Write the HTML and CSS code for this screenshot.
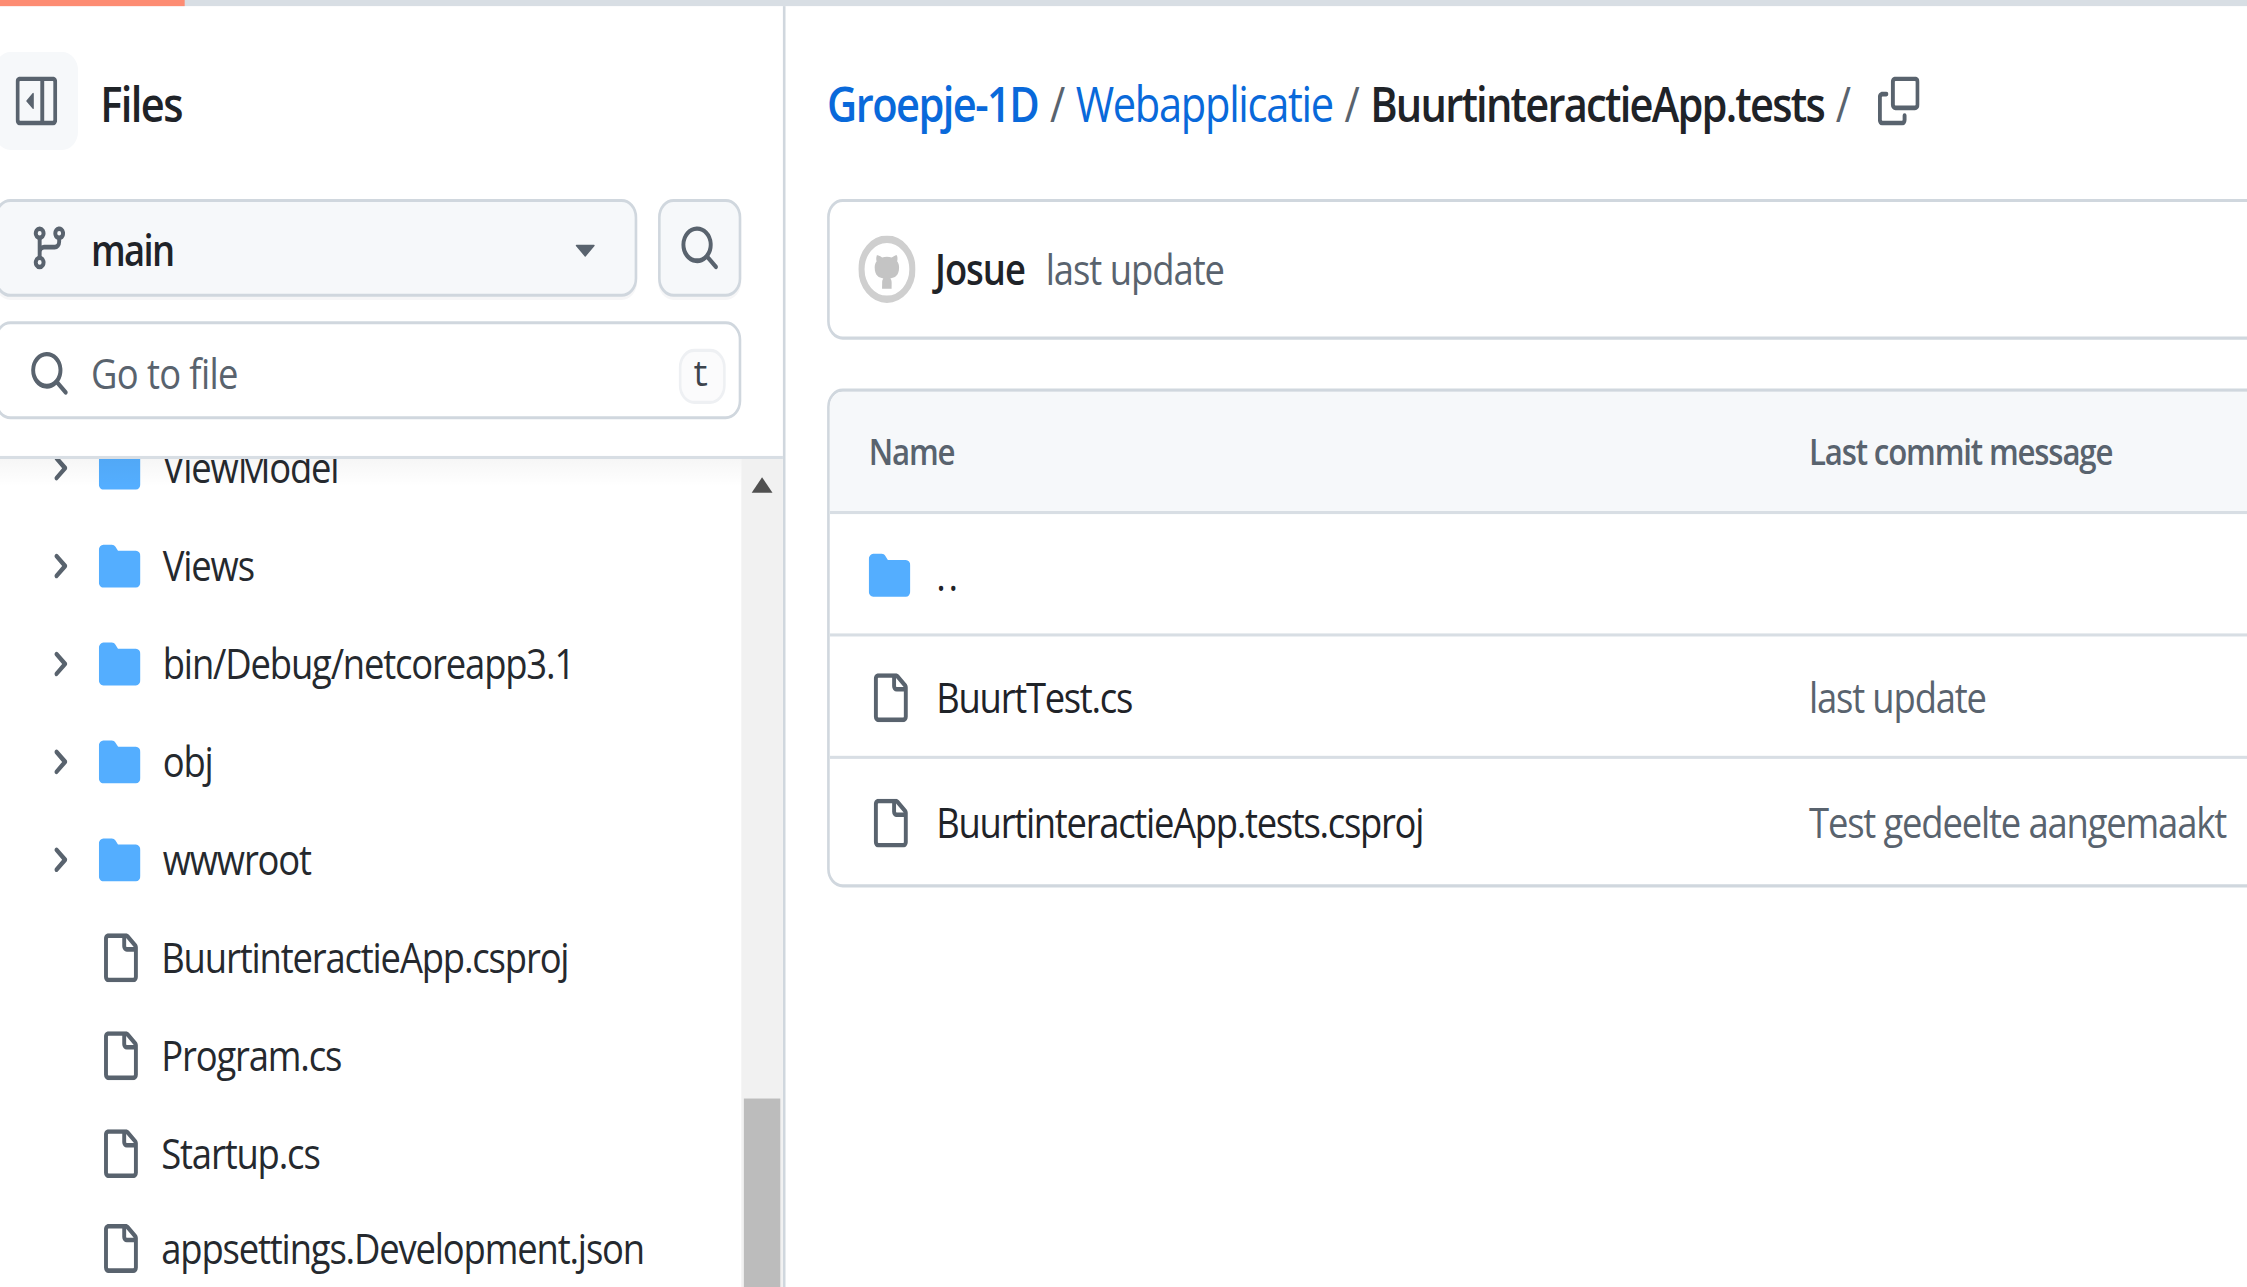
FILE: index.html
```html
<!DOCTYPE html>
<html lang="nl">
<head>
    <meta charset="UTF-8">
    <title>BuurtinteractieApp.tests</title>
    <link rel="stylesheet" href="styles.css">
</head>
<body>
    <svg class="icon-defs" aria-hidden="true">
        <symbol id="i-collapse" viewBox="0 0 16 16"><path d="m4.177 7.823 2.396-2.396A.25.25 0 0 1 7 5.604v4.792a.25.25 0 0 1-.427.177L4.177 8.177a.25.25 0 0 1 0-.354Z"/><path d="M0 1.75C0 .784.784 0 1.75 0h12.5C15.216 0 16 .784 16 1.75v12.5A1.75 1.75 0 0 1 14.25 16H1.75A1.75 1.75 0 0 1 0 14.25Zm1.75-.25a.25.25 0 0 0-.25.25v12.5c0 .138.112.25.25.25H9.5v-13Zm12.5 13a.25.25 0 0 0 .25-.25V1.75a.25.25 0 0 0-.25-.25H11v13Z"/></symbol>
        <symbol id="i-branch" viewBox="0 0 16 16"><path d="M9.5 3.25a2.25 2.25 0 1 1 3 2.122V6A2.5 2.5 0 0 1 10 8.5H6a1 1 0 0 0-1 1v1.128a2.251 2.251 0 1 1-1.5 0V5.372a2.25 2.25 0 1 1 1.5 0v1.836A2.493 2.493 0 0 1 6 7h4a1 1 0 0 0 1-1v-.628A2.25 2.25 0 0 1 9.5 3.25Zm-6 0a.75.75 0 1 0 1.5 0 .75.75 0 0 0-1.5 0Zm8.25-.75a.75.75 0 1 0 0 1.5.75.75 0 0 0 0-1.5ZM4.25 12a.75.75 0 1 0 0 1.5.75.75 0 0 0 0-1.5Z"/></symbol>
        <symbol id="i-caret" viewBox="0 0 16 16"><path d="m4.427 7.427 3.396 3.396a.25.25 0 0 0 .354 0l3.396-3.396A.25.25 0 0 0 11.396 7H4.604a.25.25 0 0 0-.177.427Z"/></symbol>
        <symbol id="i-search" viewBox="0 0 16 16"><path d="M10.68 11.74a6 6 0 0 1-7.922-8.982 6 6 0 0 1 8.982 7.922l3.04 3.04a.749.749 0 0 1-.326 1.275.749.749 0 0 1-.734-.215ZM11.5 7a4.499 4.499 0 1 0-8.997 0A4.499 4.499 0 0 0 11.5 7Z"/></symbol>
        <symbol id="i-chevron" viewBox="0 0 12 12"><path d="M4.7 10c-.2 0-.4-.1-.5-.2-.3-.3-.3-.8 0-1.1L6.9 6 4.2 3.3c-.3-.3-.3-.8 0-1.1.3-.3.8-.3 1.1 0l3.3 3.2c.3.3.3.8 0 1.1L5.3 9.7c-.2.2-.4.3-.6.3Z"/></symbol>
        <symbol id="i-folder" viewBox="0 0 16 16"><path d="M1.75 1A1.75 1.75 0 0 0 0 2.75v10.5C0 14.216.784 15 1.75 15h12.5A1.75 1.75 0 0 0 16 13.25v-8.5A1.75 1.75 0 0 0 14.25 3H7.5a.25.25 0 0 1-.2-.1l-.9-1.2C6.07 1.26 5.55 1 5 1H1.75Z"/></symbol>
        <symbol id="i-file" viewBox="0 0 16 16"><path d="M2 1.75C2 .784 2.784 0 3.75 0h6.586c.464 0 .909.184 1.237.513l2.914 2.914c.329.328.513.773.513 1.237v9.586A1.75 1.75 0 0 1 13.25 16h-9.5A1.75 1.75 0 0 1 2 14.25Zm1.75-.25a.25.25 0 0 0-.25.25v12.5c0 .138.112.25.25.25h9.5a.25.25 0 0 0 .25-.25V6h-2.75A1.75 1.75 0 0 1 9 4.25V1.5Zm6.75.062V4.25c0 .138.112.25.25.25h2.688l-.011-.013-2.914-2.914-.013-.011Z"/></symbol>
        <symbol id="i-copy" viewBox="0 0 16 16"><path d="M0 6.75C0 5.784.784 5 1.75 5h1.5a.75.75 0 0 1 0 1.5h-1.5a.25.25 0 0 0-.25.25v7.5c0 .138.112.25.25.25h7.5a.25.25 0 0 0 .25-.25v-1.5a.75.75 0 0 1 1.5 0v1.5A1.75 1.75 0 0 1 9.25 16h-7.5A1.75 1.75 0 0 1 0 14.25Z"/><path d="M5 1.75C5 .784 5.784 0 6.75 0h7.5C15.216 0 16 .784 16 1.75v7.5A1.75 1.75 0 0 1 14.25 11h-7.5A1.75 1.75 0 0 1 5 9.25Zm1.75-.25a.25.25 0 0 0-.25.25v7.5c0 .138.112.25.25.25h7.5a.25.25 0 0 0 .25-.25v-7.5a.25.25 0 0 0-.25-.25Z"/></symbol>
    </svg>

    <div class="page">
        <div class="progress"><div class="progress-fill"></div></div>
        <div class="layout">
            <aside class="sidebar">
                <div class="sidebar-head">
                    <div class="files-title">
                        <button class="toggle"><svg class="icon"><use href="#i-collapse"/></svg></button>
                        <h2>Files</h2>
                    </div>
                    <div class="branch-row">
                        <button class="branch-btn">
                            <svg class="icon"><use href="#i-branch"/></svg>
                            <span class="branch-name">main</span>
                            <svg class="icon caret"><use href="#i-caret"/></svg>
                        </button>
                        <button class="search-btn"><svg class="icon"><use href="#i-search"/></svg></button>
                    </div>
                    <div class="go-to-file">
                        <svg class="icon go-icon"><use href="#i-search"/></svg>
                        <span class="go-label">Go to file</span>
                        <kbd>t</kbd>
                    </div>
                </div>
                <div class="tree-wrap">
                    <div class="tree">
                        <ul class="tree-list">
                            <li class="tree-row"><svg class="chevron"><use href="#i-chevron"/></svg><svg class="icon folder"><use href="#i-folder"/></svg><span class="tree-label">ViewModel</span></li>
                            <li class="tree-row"><svg class="chevron"><use href="#i-chevron"/></svg><svg class="icon folder"><use href="#i-folder"/></svg><span class="tree-label">Views</span></li>
                            <li class="tree-row"><svg class="chevron"><use href="#i-chevron"/></svg><svg class="icon folder"><use href="#i-folder"/></svg><span class="tree-label">bin/Debug/netcoreapp3.1</span></li>
                            <li class="tree-row"><svg class="chevron"><use href="#i-chevron"/></svg><svg class="icon folder"><use href="#i-folder"/></svg><span class="tree-label">obj</span></li>
                            <li class="tree-row"><svg class="chevron"><use href="#i-chevron"/></svg><svg class="icon folder"><use href="#i-folder"/></svg><span class="tree-label">wwwroot</span></li>
                            <li class="tree-row file"><svg class="icon"><use href="#i-file"/></svg><span class="tree-label">BuurtinteractieApp.csproj</span></li>
                            <li class="tree-row file"><svg class="icon"><use href="#i-file"/></svg><span class="tree-label">Program.cs</span></li>
                            <li class="tree-row file"><svg class="icon"><use href="#i-file"/></svg><span class="tree-label">Startup.cs</span></li>
                            <li class="tree-row file"><svg class="icon"><use href="#i-file"/></svg><span class="tree-label">appsettings.Development.json</span></li>
                        </ul>
                    </div>
                    <div class="scrollbar">
                        <div class="scroll-up"></div>
                        <div class="scroll-thumb"></div>
                    </div>
                </div>
            </aside>

            <main class="content">
                <div class="breadcrumb">
                    <a class="crumb-owner">Groepje-1D</a>
                    <span class="sep">/</span>
                    <a class="crumb-repo">Webapplicatie</a>
                    <span class="sep">/</span>
                    <strong class="crumb-dir">BuurtinteractieApp.tests</strong>
                    <span class="sep">/</span>
                    <svg class="icon copy"><use href="#i-copy"/></svg>
                </div>

                <div class="commit-box">
                    <svg class="avatar" viewBox="0 0 22 22">
                        <circle cx="11" cy="11" r="9.8" fill="#fff" stroke="#cfcfcf" stroke-width="2.4"/>
                        <path fill="#c4c4c4" transform="translate(3.6 3.4) scale(.92)" d="M10 15.2c0-.27.01-1.13.01-2.2 0-.75-.25-1.23-.54-1.48 1.78-.2 3.65-.88 3.65-3.95 0-.88-.31-1.59-.82-2.15.08-.2.36-1.02-.08-2.12 0 0-.67-.22-2.2.82-.64-.18-1.32-.27-2-.27-.68 0-1.36.09-2 .27-1.53-1.03-2.2-.82-2.2-.82-.44 1.1-.16 1.92-.08 2.12-.51.56-.82 1.28-.82 2.15 0 3.06 1.86 3.75 3.64 3.95-.23.2-.44.55-.51 1.07L6 15.2Z"/>
                    </svg>
                    <span class="commit-author">Josue</span>
                    <span class="commit-msg">last update</span>
                </div>

                <div class="file-table">
                    <div class="table-row table-head">
                        <div class="col-name">Name</div>
                        <div class="col-msg">Last commit message</div>
                    </div>
                    <div class="table-row">
                        <div class="col-name"><svg class="icon folder"><use href="#i-folder"/></svg><span class="updir">..</span></div>
                        <div class="col-msg"></div>
                    </div>
                    <div class="table-row">
                        <div class="col-name"><svg class="icon"><use href="#i-file"/></svg>BuurtTest.cs</div>
                        <div class="col-msg">last update</div>
                    </div>
                    <div class="table-row">
                        <div class="col-name"><svg class="icon"><use href="#i-file"/></svg>BuurtinteractieApp.tests.csproj</div>
                        <div class="col-msg">Test gedeelte aangemaakt</div>
                    </div>
                </div>
            </main>
        </div>
    </div>
</body>
</html>
```

FILE: styles.css
```css
* {
    margin: 0;
    padding: 0;
    box-sizing: border-box;
}
html,
body {
    height: 100%;
    overflow: hidden;
    background: #fff;
}
/* the screenshot is a stretched capture, so the page is laid out at its
   original size and then scaled unevenly to fill the window */
.page {
    width: 864px;
    height: 421px;
    overflow: hidden;
    transform: scale(2.601, 3.06);
    transform-origin: 0 0;
    font-family: "Open Sans", "Noto Sans", sans-serif;
    font-size: 14px;
    color: #1f2328;
}
.icon-defs {
    display: none;
}
.icon {
    width: 16px;
    height: 16px;
    flex: none;
    fill: #59636e;
}
.progress {
    height: 1.5px;
    background: #d8dee4;
}
.progress-fill {
    width: 71px;
    height: 1.5px;
    background: #fd8c73;
}
.layout {
    display: flex;
    height: 419.5px;
}

/* sidebar */
.sidebar {
    width: 302px;
    flex: none;
    display: flex;
    flex-direction: column;
    border-right: 1px solid #d0d7de;
}
.sidebar-head {
    margin-left: -2px;
    padding: 15.8px 16px 11.7px 0;
    border-bottom: 1px solid #d8dee4;
}
.files-title {
    display: flex;
    align-items: center;
    gap: 8.5px;
}
.files-title h2 {
    margin-top: 2.4px;
    font-size: 16px;
    font-weight: 600;
    letter-spacing: -0.6px;
}
.toggle {
    width: 32px;
    height: 32px;
    display: flex;
    align-items: center;
    justify-content: center;
    border: none;
    border-radius: 6px;
    background: #f6f8fa;
}
.branch-row {
    display: flex;
    gap: 8px;
    margin-top: 16px;
}
.branch-btn,
.search-btn {
    height: 32px;
    display: flex;
    align-items: center;
    border: 1px solid #d0d7de;
    border-radius: 6px;
    background: #f6f8fa;
    box-shadow: 0 1px 0 rgba(31, 35, 40, 0.04);
    font-family: inherit;
    color: inherit;
}
.branch-btn {
    flex: 1;
    padding: 0 12px;
    gap: 8px;
}
.branch-name {
    flex: 1;
    margin-top: 1px;
    text-align: left;
    font-size: 14px;
    font-weight: 600;
    letter-spacing: -0.65px;
}
.caret {
    margin-right: -0.5px;
}
.search-btn {
    width: 32px;
    justify-content: center;
}
.go-to-file {
    height: 32px;
    margin-top: 8px;
    padding: 0 5.5px 0 12px;
    display: flex;
    align-items: center;
    gap: 8px;
    border: 1px solid #d0d7de;
    border-radius: 6px;
}
.go-icon {
    margin-top: 2px;
}
.go-label {
    flex: 1;
    color: #59636e;
    letter-spacing: -0.25px;
}
kbd {
    width: 18px;
    height: 18px;
    margin-top: 3px;
    display: flex;
    align-items: center;
    justify-content: center;
    border: 1px solid #eef0f3;
    border-radius: 6px;
    background: #fbfbfc;
    font-family: "Liberation Mono", monospace;
    font-size: 12px;
    color: #3d444d;
}
.tree-wrap {
    flex: 1;
    min-height: 0;
    display: flex;
}
.tree {
    flex: 1;
    overflow: hidden;
    position: relative;
}
.tree::before {
    content: "";
    position: absolute;
    top: 0;
    left: 0;
    right: 0;
    height: 9px;
    background: linear-gradient(rgba(0, 0, 0, 0.035), rgba(0, 0, 0, 0));
}
.tree-list {
    list-style: none;
    margin-top: -13px;
}
.tree-row {
    height: 31.95px;
    padding-left: 16.6px;
    display: flex;
    align-items: center;
    letter-spacing: -0.45px;
    color: #25292e;
}
.tree-row.file {
    padding-left: 38px;
}
.tree-row .icon {
    margin-right: 8.7px;
}
.tree-row.file .icon {
    margin-right: 8px;
}
.tree-label {
    margin-top: -1px;
}
.chevron {
    width: 12px;
    height: 12px;
    flex: none;
    margin-right: 9.3px;
    fill: #59636e;
}
.folder {
    fill: #54aeff;
}
.scrollbar {
    width: 16px;
    flex: none;
    display: flex;
    flex-direction: column;
    align-items: center;
    background: #f1f1f1;
}
.scroll-up {
    margin-top: 6px;
    border-left: 4px solid transparent;
    border-right: 4px solid transparent;
    border-bottom: 5px solid #505050;
}
.scroll-thumb {
    width: 14px;
    height: 62px;
    margin-top: auto;
    background: #bcbcbc;
}

/* main column */
.content {
    flex: 1;
    min-width: 0;
    padding-left: 16px;
}
.breadcrumb {
    height: 32px;
    margin-top: 16.5px;
    display: flex;
    align-items: center;
    font-size: 16px;
    letter-spacing: -0.5px;
    white-space: nowrap;
}
.crumb-owner {
    font-weight: 600;
    letter-spacing: -0.6px;
    color: #0969da;
}
.crumb-repo {
    color: #0969da;
}
.crumb-dir {
    font-weight: 600;
    letter-spacing: -0.68px;
}
.sep {
    margin: 0 4.5px;
    color: #59636e;
}
.copy {
    margin: -2px 0 0 6px;
}
.commit-box {
    width: 640px;
    height: 45.5px;
    margin-top: 15.2px;
    padding-left: 11px;
    display: flex;
    align-items: center;
    border: 1px solid #d0d7de;
    border-radius: 6px;
    letter-spacing: -0.4px;
}
.avatar {
    width: 22px;
    height: 22px;
    flex: none;
    margin-right: 7.5px;
}
.commit-author {
    font-weight: 600;
    margin-right: 8px;
}
.commit-msg {
    color: #59636e;
}
.file-table {
    width: 640px;
    margin-top: 16px;
    border: 1px solid #d0d7de;
    border-radius: 6px;
    overflow: hidden;
}
.table-row {
    height: 40.25px;
    padding-left: 15px;
    display: flex;
    align-items: center;
    border-bottom: 1px solid #d8dee4;
    letter-spacing: -0.5px;
}
.table-row:last-child {
    border-bottom: none;
}
.table-head {
    background: #f6f8fa;
    font-size: 12px;
    font-weight: 600;
    letter-spacing: -0.45px;
    color: #59636e;
}
.table-head .col-name,
.table-head .col-msg {
    margin-top: 1px;
}
.col-name {
    width: 361.5px;
    flex: none;
    display: flex;
    align-items: center;
    gap: 10px;
}
.col-msg {
    letter-spacing: -0.45px;
    color: #59636e;
}
.updir {
    letter-spacing: 1px;
}
```
